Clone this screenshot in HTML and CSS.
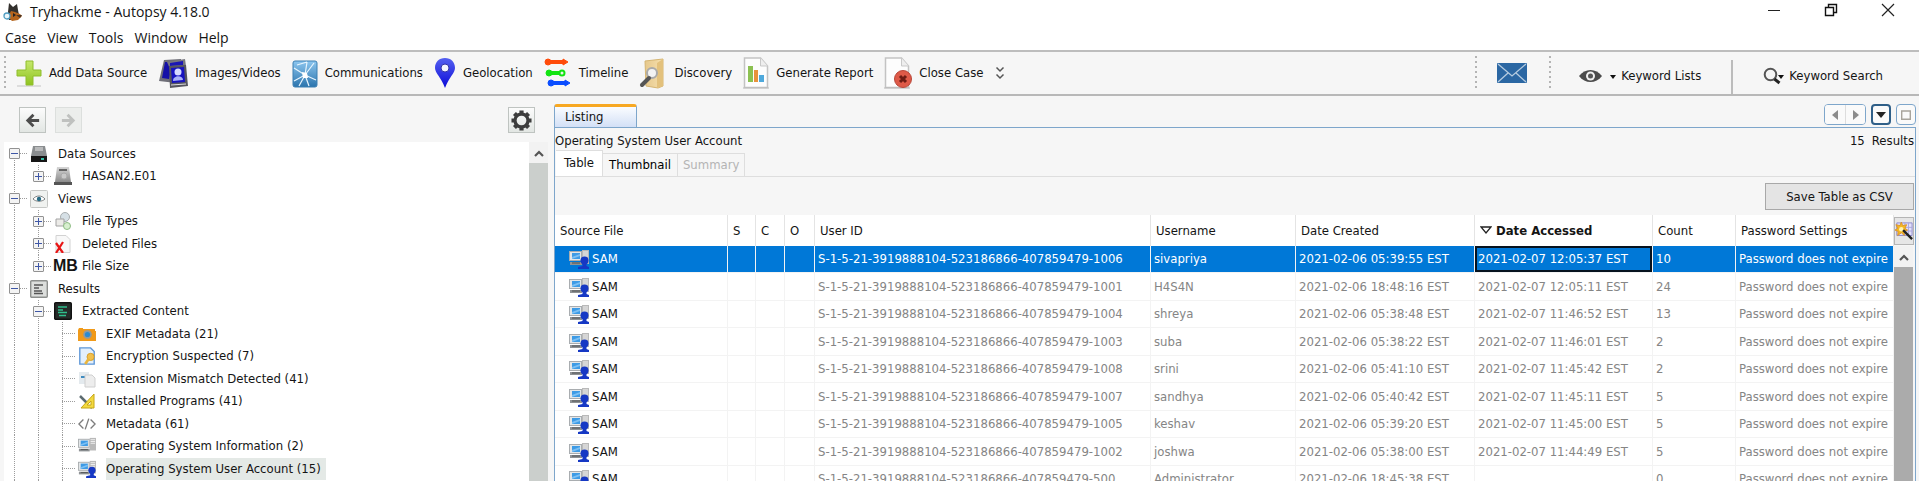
FILE: index.html
```html
<!DOCTYPE html>
<html lang="en">
<head>
<meta charset="utf-8">
<title>Tryhackme - Autopsy 4.18.0</title>
<link rel="stylesheet" href="styles.css">
</head>
<body>
<svg class="defs" aria-hidden="true">
  <defs>
    <linearGradient id="gGreen" x1="0" y1="0" x2="0" y2="1"><stop offset="0" stop-color="#c5e86c"/><stop offset="1" stop-color="#8fc31f"/></linearGradient>
    <linearGradient id="gSky" x1="0" y1="0" x2="0" y2="1"><stop offset="0" stop-color="#8cc6ef"/><stop offset="1" stop-color="#2b74ad"/></linearGradient>
    <linearGradient id="gBlue" x1="0" y1="0" x2="0" y2="1"><stop offset="0" stop-color="#5560f0"/><stop offset="1" stop-color="#0b0bd8"/></linearGradient>
    <linearGradient id="gFolder" x1="0" y1="0" x2="1" y2="0"><stop offset="0" stop-color="#e6c88c"/><stop offset="1" stop-color="#f6e0ae"/></linearGradient>
    <linearGradient id="gDrive" x1="0" y1="0" x2="0" y2="1"><stop offset="0" stop-color="#d6d6d6"/><stop offset="1" stop-color="#8c8c8c"/></linearGradient>
    <symbol id="pc" viewBox="0 0 20 20">
      <path d="M13 1h7v14h-7z" fill="#b9b9b9"/><path d="M14 3h5M14 5h5M14 7h5" stroke="#f2f2f2"/>
      <path d="M0 2h13v10H0z" fill="#a9adb0"/><path d="M1 3h11v8H1z" fill="#e3e6e8"/>
      <path d="M3 4h8v6H3z" fill="#3d9be6"/><path d="M3 8l8-3v2l-8 3z" fill="#7dc0f3"/>
      <path d="M1 13h12v3H1z" fill="#8f9295"/><path d="M3 14h8" stroke="#4e5254"/>
    </symbol>
    <symbol id="pcuser" viewBox="0 0 20 20">
      <use href="#pc" width="20" height="20"/>
      <circle cx="15.500" cy="11.500" r="4" fill="#1638c4"/><path d="M13.500 14h4v3l2.500 1v2H9v-2l4.500-1z" fill="#1638c4"/>
    </symbol>
    <symbol id="page" viewBox="0 0 26 32">
      <path d="M1.500 1h16l7 8v21.500h-23z" fill="#fdfdfd" stroke="#c3c3c3" stroke-width="1.500"/><path d="M17.500 1v8h7" fill="#eee" stroke="#c9c9c9"/><path d="M0 31h26" stroke="#bbb"/>
    </symbol>
  </defs>
</svg>

<header class="titlebar">
  <svg class="app-icon" viewBox="0 0 20 18"><path d="M6 0l4 4 4-3 1 6 1 5-3 5H6l-1-8z" fill="#33302d"/><path d="M8 8l4 1 5 2 2 2-4 4-6 1-4-4z" fill="#b5651d"/><path d="M10 10l3 2-3 2z" fill="#222"/><path d="M13 12l6 0-2 3z" fill="#4b3626"/><circle cx="4" cy="13" r="3" fill="#eaf6fb" stroke="#4f9cc0" stroke-width="1.300"/></svg>
  <h1 class="title">Tryhackme - Autopsy 4.18.0</h1>
  <div class="window-controls">
    <button aria-label="Minimize"><svg viewBox="0 0 14 14"><path d="M1 7.500h12" stroke="#222"/></svg></button>
    <button aria-label="Restore"><svg viewBox="0 0 14 14"><path d="M1.500 4.500h8v8h-8zM4.500 4V1.500h8v8H10" fill="none" stroke="#111" stroke-width="1.400"/></svg></button>
    <button aria-label="Close"><svg viewBox="0 0 14 14"><path d="M1 1l12 12M13 1L1 13" stroke="#222" stroke-width="1.200"/></svg></button>
  </div>
</header>

<nav class="menubar">
  <button>Case</button><button>View</button><button>Tools</button><button>Window</button><button>Help</button>
</nav>

<div class="toolbar">
  <span class="grip"></span>
  <div class="tools">
    <button class="tool add"><svg viewBox="0 0 26 32"><path d="M1 29h24" stroke="#ddd" stroke-width="2"/><path d="M10 4h7v9h8v6h-8v9h-7v-9H1v-6h9z" fill="url(#gGreen)" stroke="#8fbd2c"/></svg>Add Data Source</button>
    <button class="tool images"><svg viewBox="0 0 30 32"><path d="M6 3l17-1v6L18 26 1 24z" fill="#6f6f78"/><path d="M7 5l8 0-4 17-7-1z" fill="#1410a8"/><path d="M9 5l18-3 1 7-16 3z" fill="#77777f"/><path d="M12 6l13-2v4l-13 1z" fill="#1b16b4"/><path d="M11 9l17-1 2 21-18 2z" fill="#55555e"/><path d="M13 11l13-1 1 15-13 1z" fill="#1713c0"/><circle cx="20" cy="15" r="3.500" fill="#d5d9ff"/><path d="M15 24c0-6 10-6 10-1z" fill="#aab1f8"/><path d="M13 28l15-1" stroke="#ddd"/></svg>Images/Videos</button>
    <button class="tool comms"><svg viewBox="0 0 26 32"><rect x="1" y="4" width="24" height="26" rx="2" fill="url(#gSky)" stroke="#3d80b3"/><g stroke="#e8f5fd" stroke-width="1.200" fill="none"><path d="M2 11l11 7L22 6M13 18l-6 11M13 18l11 5M13 18l4 11M2 24l11-6M13 18l2-13M15 5l-10 3"/></g><path d="M10 15l5 1 1 5-5 0z" fill="#fff"/></svg>Communications</button>
    <button class="tool geo"><svg viewBox="0 0 22 32"><path d="M11 1c-6 0-10 4-10 10 0 5 6 9 10 20 4-11 10-15 10-20 0-6-4-10-10-10z" fill="url(#gBlue)"/><circle cx="11" cy="11" r="4" fill="#f4f4ff" stroke="#3032a8"/></svg>Geolocation</button>
    <button class="tool time"><svg viewBox="0 0 28 32"><g fill="#ff4b0a" stroke="#ff4b0a"><circle cx="4" cy="5" r="3"/><path d="M4 5h16" stroke-width="4"/><path d="M19 2l5 3-5 3z"/></g><g fill="#12e412" stroke="#12e412"><circle cx="5" cy="16" r="3"/><path d="M5 16h13" stroke-width="4"/><circle cx="18" cy="16" r="2.500" fill="#eee" stroke-width="2"/></g><g fill="#0a4dff" stroke="#0a4dff"><circle cx="7" cy="26" r="3"/><path d="M7 26h15" stroke-width="4"/><path d="M21 23l5 3-5 3z"/></g></svg>Timeline</button>
    <button class="tool disc"><svg viewBox="0 0 28 32"><path d="M6 4l18-2v27l-5 2L7 29z" fill="url(#gFolder)" stroke="#d5b572"/><path d="M18 6l6-4v27l-6 2z" fill="#e3c17c"/><circle cx="13" cy="16" r="5" fill="#f3f3f3" stroke="#aaa" stroke-width="2"/><path d="M10 21l-7 7" stroke="#555" stroke-width="4" stroke-linecap="round"/></svg>Discovery</button>
    <button class="tool report"><svg viewBox="0 0 26 32"><use href="#page" width="26" height="32"/><path d="M5 9h5v16H5z" fill="#8cc152"/><path d="M11 13h4v12h-4z" fill="#e8923c"/><path d="M16 18h5v7h-5z" fill="#4fa9dc"/></svg>Generate Report</button>
    <button class="tool closecase"><svg viewBox="0 0 28 32"><use href="#page" width="26" height="32"/><circle cx="19" cy="22" r="8.500" fill="#de5a48" stroke="#b8473a"/><path d="M16 19l6 6M22 19l-6 6" stroke="#6d1c14" stroke-width="3"/></svg>Close Case</button>
    <button class="more" aria-label="More"><svg viewBox="0 0 10 14"><path d="M1.500 1.500L5 5l3.500-3.500M1.500 8.500L5 12l3.500-3.500" fill="none" stroke="#555" stroke-width="1.500"/></svg></button>
  </div>
  <span class="grip"></span>
  <button class="mail" aria-label="Messages"><svg viewBox="0 0 30 20"><rect width="30" height="20" rx="1" fill="#2b67a3"/><path d="M1 1l14 12L29 1M1 19l10-9M29 19l-10-9" fill="none" stroke="#b5cbe0" stroke-width="1.300"/></svg></button>
  <span class="grip"></span>
  <button class="kw lists"><svg viewBox="0 0 38 14"><path d="M0 7c6-8 17-8 23 0-6 8-17 8-23 0z" fill="#4b4b4b"/><circle cx="11.500" cy="7" r="4.500" fill="#f0f0f0"/><circle cx="11.500" cy="7" r="2.500" fill="#555"/><path d="M31 6h6l-3 4z" fill="#111"/></svg>Keyword Lists</button>
  <span class="sep"></span>
  <button class="kw search"><svg viewBox="0 0 22 18"><circle cx="7.500" cy="7.500" r="5.800" fill="#f5f5f5" stroke="#555" stroke-width="2"/><path d="M11.500 12l5 4" stroke="#222" stroke-width="3"/><path d="M15 8h6l-3 4z" fill="#111"/></svg>Keyword Search</button>
</div>

<main class="workspace">
  <section class="explorer" aria-label="Explorer">
    <div class="nav">
      <button aria-label="Back"><svg viewBox="0 0 18 18"><path d="M16 9H4M10 3L4 9l6 6" fill="none" stroke="#4c4c4c" stroke-width="3"/></svg></button>
      <button aria-label="Forward" disabled><svg viewBox="0 0 18 18"><path d="M2 9h12M8 3l6 6-6 6" fill="none" stroke="#bfc1bf" stroke-width="3"/></svg></button>
      <button class="gear" aria-label="Options"><svg viewBox="0 0 22 22"><circle cx="11" cy="11" r="6.800" fill="none" stroke="#3d3d3d" stroke-width="3.400"/><g stroke="#3d3d3d" stroke-width="4.400"><path d="M11 .5v4M11 17.500v4M.5 11h4M17.500 11h4M3.600 3.600l2.800 2.800M15.600 15.600l2.800 2.800M18.400 3.600l-2.800 2.800M6.400 15.600l-2.800 2.800"/></g></svg></button>
    </div>
    <div class="tree-area">
      <ul class="tree">
        <li><span class="slot first"><button class="box" aria-label="Collapse"></button></span><svg viewBox="0 0 18 18"><path d="M3 1h12l2 10H1z" fill="#8a8d8f"/><path d="M5 3h8M5 5h8" stroke="#e6e6e6"/><path d="M1 11h16v6H1z" fill="#161616"/><path d="M11 13h3v2h-3z" fill="#37c0a8"/></svg>Data Sources</li>
        <li><span class="slot pass"></span><span class="slot last"><button class="box plus" aria-label="Expand"></button></span><svg viewBox="0 0 18 18"><path d="M3 0h12l2 15H1z" fill="url(#gDrive)"/><path d="M5 3h8" stroke="#444" stroke-width="1.500"/><circle cx="10" cy="9" r="3" fill="#c9c9c9" stroke="#aaa"/><path d="M0 15h18v3H0z" fill="#555"/></svg>HASAN2.E01</li>
        <li><span class="slot tee"><button class="box" aria-label="Collapse"></button></span><svg viewBox="0 0 18 18"><rect x=".5" y=".5" width="17" height="17" rx="1" fill="#f0f2f0" stroke="#c6c8c6"/><path d="M3 9c3-4 9-4 12 0-3 3-9 3-12 0z" fill="#fff" stroke="#7d8182"/><circle cx="9" cy="9" r="2.200" fill="#286c85"/></svg>Views</li>
        <li><span class="slot pass"></span><span class="slot tee"><button class="box plus" aria-label="Expand"></button></span><svg viewBox="0 0 18 18"><circle cx="11" cy="5" r="4.500" fill="#d6e0e6" stroke="#a9aeb0"/><path d="M2 7h8v7H2z" fill="#ecebe8" stroke="#a2a2a2"/><circle cx="13" cy="14" r="3.500" fill="#d8efcf" stroke="#8ebc84"/></svg>File Types</li>
        <li><span class="slot pass"></span><span class="slot tee"><button class="box plus" aria-label="Expand"></button></span><svg viewBox="0 0 18 18"><path d="M2 .5h10l4 4v13H2z" fill="#f8f8f8" stroke="#d2d2d2"/><path d="M2 8l7 10M9 7L2 18" stroke="#e81515" stroke-width="2.200"/></svg>Deleted Files</li>
        <li><span class="slot pass"></span><span class="slot last"><button class="box plus" aria-label="Expand"></button></span><b class="mb">MB</b>File Size</li>
        <li><span class="slot tee"><button class="box" aria-label="Collapse"></button></span><svg viewBox="0 0 18 18"><rect x=".7" y=".7" width="16.600" height="16.600" rx="1" fill="#dcdedc" stroke="#8d8f8d" stroke-width="1.400"/><path d="M4 5h9M4 8h5M4 11h8M4 13.500h9" stroke="#555" stroke-width="1.500"/></svg>Results</li>
        <li><span class="slot pass"></span><span class="slot tee"><button class="box" aria-label="Collapse"></button></span><svg viewBox="0 0 18 18"><rect x=".7" y=".7" width="16.600" height="16.600" rx="1" fill="#262b29" stroke="#111" stroke-width="1.400"/><path d="M4 5h9M4 8h5M4 10.500h9M5 13.500h7" stroke="#2fbf8c" stroke-width="1.500"/></svg>Extracted Content</li>
        <li><span class="slot pass"></span><span class="slot pass"></span><span class="slot tee"></span><svg viewBox="0 0 18 18"><path d="M0 5l1-2h4v1h12v2h1v10H0z" fill="#f09a1a"/><circle cx="9.500" cy="9.500" r="4.300" fill="#8f9aa0"/><circle cx="9.500" cy="9.500" r="2.600" fill="#2b8bd0"/></svg>EXIF Metadata (21)</li>
        <li><span class="slot pass"></span><span class="slot pass"></span><span class="slot tee"></span><svg viewBox="0 0 18 20"><path d="M1 1h12l4 4v14H1z" fill="#e3effb" stroke="#5c96d8" stroke-width="1.500"/><circle cx="13" cy="11" r="4" fill="#f2c04c" stroke="#d29a26"/><path d="M11 13l-4 6" stroke="#eab53c" stroke-width="3"/></svg>Encryption Suspected (7)</li>
        <li><span class="slot pass"></span><span class="slot pass"></span><span class="slot tee"></span><svg viewBox="0 0 18 18"><path d="M1 2h10v12H1z" fill="#e4eaee"/><path d="M3 7h6" stroke="#3e8bc0" stroke-width="2"/><path d="M7 5h7l3 3v9H7z" fill="#ededed" stroke="#cfcfcf"/></svg>Extension Mismatch Detected (41)</li>
        <li><span class="slot pass"></span><span class="slot pass"></span><span class="slot tee"></span><svg viewBox="0 0 18 18"><path d="M2 4l12 12" stroke="#5c6b70" stroke-width="2.500"/><path d="M16 2v14H3z" fill="#f3d940" stroke="#c6a617"/><path d="M13 9v4H9z" fill="#fff" stroke="#c6a617"/></svg>Installed Programs (41)</li>
        <li><span class="slot pass"></span><span class="slot pass"></span><span class="slot tee"></span><svg viewBox="0 0 20 18"><path d="M6 4L1 9l5 5M14 4l5 5-5 5M12 3L8 15" fill="none" stroke="#7d7d7d" stroke-width="1.500"/></svg>Metadata (61)</li>
        <li><span class="slot pass"></span><span class="slot pass"></span><span class="slot tee"></span><svg viewBox="0 0 20 20"><use href="#pc" width="20" height="20"/></svg>Operating System Information (2)</li>
        <li><span class="slot pass"></span><span class="slot pass"></span><span class="slot tee"></span><svg viewBox="0 0 20 20"><use href="#pcuser" width="20" height="20"/></svg><span class="selected">Operating System User Account (15)</span></li>
        <li><span class="slot pass"></span><span class="slot pass"></span><span class="slot tee"></span></li>
      </ul>
      <div class="scroll"><button aria-label="Scroll up"><svg viewBox="0 0 10 8"><path d="M1 7l4-4 4 4" fill="none" stroke="#555" stroke-width="2.200"/></svg></button><span class="thumb"></span></div>
    </div>
  </section>

  <section class="listing" aria-label="Listing">
    <div class="tabstrip">
      <button class="tab">Listing</button>
      <div class="tabtools">
        <span class="pair"><button aria-label="Previous tab"><svg viewBox="0 0 6 10"><path d="M6 0v10L0 5z" fill="#8c8c8c"/></svg></button><button aria-label="Next tab"><svg viewBox="0 0 6 10"><path d="M0 0v10l6-5z" fill="#8c8c8c"/></svg></button></span>
        <button class="single dark" aria-label="Tab list"><svg viewBox="0 0 10 6"><path d="M0 0h10L5 6z" fill="#222"/></svg></button>
        <button class="single" aria-label="Maximize"><svg viewBox="0 0 10 10"><path d="M.7 1h8.600v8.300H.7z" fill="none" stroke="#a8a49c" stroke-width="1.400"/></svg></button>
      </div>
    </div>
    <div class="panel">
      <div class="caption"><span>Operating System User Account</span><span class="results"><span>15</span><span>Results</span></span></div>
      <div class="subtabs"><button class="on">Table</button><button class="thumbs">Thumbnail</button><button disabled>Summary</button></div>
      <div class="actions"><button>Save Table as CSV</button></div>
      <div class="grid-area">
        <div class="grid">
          <table>
            <colgroup><col class="c-src"><col class="c-s"><col class="c-c"><col class="c-o"><col class="c-id"><col class="c-user"><col class="c-date"><col class="c-acc"><col class="c-count"><col></colgroup>
            <thead><tr><th>Source File</th><th>S</th><th>C</th><th>O</th><th>User ID</th><th>Username</th><th>Date Created</th><th class="sorted"><svg viewBox="0 0 12 8"><path d="M1 1h10L6 7z" fill="none" stroke="#222" stroke-width="1.300"/></svg>Date Accessed</th><th>Count</th><th>Password Settings</th></tr></thead>
            <tbody>
              <tr class="active"><td><svg><use href="#pcuser"/></svg>SAM</td><td></td><td></td><td></td><td>S-1-5-21-3919888104-523186866-407859479-1006</td><td>sivapriya</td><td>2021-02-06 05:39:55 EST</td><td class="focus">2021-02-07 12:05:37 EST</td><td>10</td><td>Password does not expire</td></tr>
              <tr><td><svg><use href="#pcuser"/></svg>SAM</td><td></td><td></td><td></td><td>S-1-5-21-3919888104-523186866-407859479-1001</td><td>H4S4N</td><td>2021-02-06 18:48:16 EST</td><td>2021-02-07 12:05:11 EST</td><td>24</td><td>Password does not expire</td></tr>
              <tr><td><svg><use href="#pcuser"/></svg>SAM</td><td></td><td></td><td></td><td>S-1-5-21-3919888104-523186866-407859479-1004</td><td>shreya</td><td>2021-02-06 05:38:48 EST</td><td>2021-02-07 11:46:52 EST</td><td>13</td><td>Password does not expire</td></tr>
              <tr><td><svg><use href="#pcuser"/></svg>SAM</td><td></td><td></td><td></td><td>S-1-5-21-3919888104-523186866-407859479-1003</td><td>suba</td><td>2021-02-06 05:38:22 EST</td><td>2021-02-07 11:46:01 EST</td><td>2</td><td>Password does not expire</td></tr>
              <tr><td><svg><use href="#pcuser"/></svg>SAM</td><td></td><td></td><td></td><td>S-1-5-21-3919888104-523186866-407859479-1008</td><td>srini</td><td>2021-02-06 05:41:10 EST</td><td>2021-02-07 11:45:42 EST</td><td>2</td><td>Password does not expire</td></tr>
              <tr><td><svg><use href="#pcuser"/></svg>SAM</td><td></td><td></td><td></td><td>S-1-5-21-3919888104-523186866-407859479-1007</td><td>sandhya</td><td>2021-02-06 05:40:42 EST</td><td>2021-02-07 11:45:11 EST</td><td>5</td><td>Password does not expire</td></tr>
              <tr><td><svg><use href="#pcuser"/></svg>SAM</td><td></td><td></td><td></td><td>S-1-5-21-3919888104-523186866-407859479-1005</td><td>keshav</td><td>2021-02-06 05:39:20 EST</td><td>2021-02-07 11:45:00 EST</td><td>5</td><td>Password does not expire</td></tr>
              <tr><td><svg><use href="#pcuser"/></svg>SAM</td><td></td><td></td><td></td><td>S-1-5-21-3919888104-523186866-407859479-1002</td><td>joshwa</td><td>2021-02-06 05:38:00 EST</td><td>2021-02-07 11:44:49 EST</td><td>5</td><td>Password does not expire</td></tr>
              <tr><td><svg><use href="#pcuser"/></svg>SAM</td><td></td><td></td><td></td><td>S-1-5-21-3919888104-523186866-407859479-500</td><td>Administrator</td><td>2021-02-06 18:45:38 EST</td><td></td><td>0</td><td>Password does not expire</td></tr>
            </tbody>
          </table>
        </div>
        <div class="side">
          <button class="config" aria-label="Choose columns"><svg viewBox="0 0 20 20"><path d="M2 1h17v14H2z" fill="#e2e0fa" stroke="#8a85c8"/><path d="M11 1v14M15 1v14M6 6h13M6 10h13" stroke="#a9a5dc"/><path d="M7 0l1.500 4L13 3l-2 4 3 2-4 1.500.5 4.500L7 12l-4 3 .5-4.500L0 9l3-2-2-4 4.500 1z" fill="#f5b820" stroke="#d9922a"/><circle cx="7" cy="8" r="2.500" fill="#fff3b0"/><path d="M9 9l10 10" stroke="#222" stroke-width="2.600"/></svg></button>
          <div class="scroll dark"><button aria-label="Scroll up"><svg viewBox="0 0 10 8"><path d="M1 7l4-4 4 4" fill="none" stroke="#555" stroke-width="2.200"/></svg></button><span class="thumb"></span></div>
        </div>
      </div>
    </div>
  </section>
</main>
</body>
</html>
```
FILE: styles.css
```css
* { box-sizing: border-box; }

body {
  margin: 0;
  height: 100vh;
  display: flex;
  flex-direction: column;
  overflow: hidden;
  background: #f6f6f6;
  color: #141414;
  font: 13px/18px "DejaVu Sans Condensed", "Noto Sans", sans-serif;
}

button {
  margin: 0;
  padding: 0;
  border: 0;
  background: none;
  color: inherit;
  font: inherit;
  white-space: nowrap;
}

svg { display: block; flex: none; }
.defs { position: absolute; width: 0; height: 0; }

/* Title and menu */
.titlebar {
  display: flex;
  align-items: center;
  height: 24px;
  padding: 0 24px 0 3px;
  background: #fff;
}
.app-icon { width: 20px; height: 18px; margin-right: 7px; }
.title { margin: 0; font: 14px/20px "Open Sans", "Noto Sans", sans-serif; }
.window-controls { display: flex; gap: 43px; margin-left: auto; padding-bottom: 4px; }
.window-controls svg { width: 14px; height: 14px; }
.menubar {
  display: flex;
  gap: 11px;
  height: 28px;
  padding: 1px 5px 0;
  background: #fff;
  border-bottom: 2px solid #bdbdbd;
  font: 14px/25px "Open Sans", "Noto Sans", sans-serif;
}

/* Toolbar */
.toolbar {
  display: flex;
  align-items: center;
  height: 44px;
  border-bottom: 2px solid #b8b8b8;
  flex: none;
}
.grip {
  flex: none;
  width: 2px;
  height: 34px;
  margin-left: 4px;
  background: repeating-linear-gradient(#b4b4b4 0 2px, transparent 2px 5px);
}
.tools { display: flex; align-items: center; flex: 1; padding-left: 10px; }
.tool { display: flex; align-items: center; gap: 7px; margin-right: 11px; }
.tool svg { height: 32px; width: 26px; }
.tool.images svg { width: 30px; }
.tool.geo svg { width: 22px; }
.tool.time svg, .tool.disc svg, .tool.closecase svg { width: 28px; }
.more svg { width: 10px; height: 14px; }
.mail { margin: 0 18px 0 20px; }
.mail svg { width: 30px; height: 20px; }
.kw { display: flex; align-items: center; gap: 4px; padding-top: 6px; }
.kw.lists { margin: 0 30px 0 28px; }
.kw.lists svg { width: 38px; height: 14px; }
.kw.search { margin: 0 36px 0 30px; }
.kw.search svg { width: 22px; height: 18px; }
.sep { width: 2px; align-self: flex-end; height: 34px; background: #bcbcbc; }

/* Two panes */
.workspace { display: flex; flex: 1; min-height: 0; }

.explorer { display: flex; flex-direction: column; flex: none; width: 548px; padding-left: 4px; }
.nav { display: flex; align-items: flex-start; gap: 9px; height: 46px; padding: 11px 13px 0 15px; flex: none; }
.nav button {
  display: grid;
  place-items: center;
  width: 27px;
  height: 26px;
  border: 1px solid #bfc4c1;
  background: linear-gradient(#fcfcfc, #e2e6e3);
}
.nav button:disabled { border-color: #dcdfdd; background: #eceeec; }
.nav svg { width: 17px; height: 17px; }
.nav .gear { margin-left: auto; }
.nav .gear svg { width: 21px; height: 21px; }

.tree-area { display: flex; flex: 1; min-height: 0; background: #fff; }
.tree { flex: 1; margin: 0; padding: 0; list-style: none; overflow: hidden; }
.tree li { display: flex; align-items: center; height: 22px; white-space: nowrap; }
.tree li:nth-child(odd) { height: 23px; }
.tree li > svg { width: 18px; height: 18px; margin: 0 10px 0 2px; }
.mb { width: 30px; padding-left: 1px; flex: none; font: bold 16px/20px "Liberation Sans", sans-serif; }
.selected { background: #e4e9e6; padding-right: 5px; line-height: 22px; }

.slot {
  --v: repeating-linear-gradient(#9c9c9c 0 1px, transparent 1px 2px);
  --h: repeating-linear-gradient(90deg, #9c9c9c 0 1px, transparent 1px 2px);
  flex: none;
  display: flex;
  align-items: center;
  width: 24px;
  height: 100%;
  padding-left: 5px;
  background-repeat: no-repeat;
}
.pass { background-image: var(--v); background-position: 10px 0; background-size: 1px 100%; }
.tee, .last, .first { background-image: var(--v), var(--h); }
.tee { background-position: 10px 0, 10px 50%; background-size: 1px 100%, 14px 1px; }
.last { background-position: 10px 0, 10px 50%; background-size: 1px 50%, 14px 1px; }
.first { background-position: 10px 100%, 10px 50%; background-size: 1px 50%, 14px 1px; }
.box {
  width: 11px;
  height: 11px;
  border: 1px solid #929292;
  border-radius: 1px;
  background: linear-gradient(#3f57a6, #3f57a6) 50% 50% / 7px 1px no-repeat #f4f4f4;
}
.box.plus {
  background:
    linear-gradient(#3f57a6, #3f57a6) 50% 50% / 7px 1px no-repeat,
    linear-gradient(#3f57a6, #3f57a6) 50% 50% / 1px 7px no-repeat #f4f4f4;
}

.scroll { display: flex; flex-direction: column; flex: none; width: 19px; background: #f2f2f2; }
.scroll button { display: grid; place-items: center; height: 21px; flex: none; }
.scroll svg { width: 10px; height: 8px; }
.thumb { flex: 1; background: #cbcfcc; }
.scroll.dark { flex: 1; }
.scroll.dark .thumb { background: #ababab; }

.listing { display: flex; flex-direction: column; flex: 1; min-width: 0; padding: 8px 3px 0 6px; }
.tabstrip { display: flex; justify-content: space-between; height: 23px; flex: none; }
.tab {
  width: 83px;
  padding-left: 10px;
  text-align: left;
  border: solid #7ea6cb;
  border-width: 3px 1px 0;
  border-top-color: #f7a823;
  border-radius: 3px 3px 0 0;
  background: linear-gradient(#fafcff, #d3e0f6);
}
.tabtools { display: flex; gap: 5px; height: 21px; }
.tabtools button { display: grid; place-items: center; width: 20px; background: #fafafa; }
.pair { display: flex; border: 1px solid #7ea6cb; border-radius: 4px; overflow: hidden; }
.pair button + button { border-left: 1px solid #ddd; }
.pair svg { width: 6px; height: 10px; }
.single { border: 1px solid #7ea6cb; border-radius: 4px; }
.single.dark { border: 2px solid #2f5f88; }
.single svg { width: 10px; }

.panel {
  display: flex;
  flex-direction: column;
  flex: 1;
  min-height: 0;
  border: solid #7ea6cb;
  border-width: 1px 1px 0 1px;
}
.caption { display: flex; justify-content: space-between; height: 23px; padding: 4px 1px 0 0; flex: none; }
.results { display: flex; gap: 7px; }
.subtabs { display: flex; align-items: flex-end; height: 26px; flex: none; border-bottom: 1px solid #dedede; padding-left: 1px; }
.subtabs button { height: 23px; padding: 0 5px; border: 1px solid #dedede; border-left-width: 0; border-bottom: 0; }
.subtabs .on { height: 26px; padding: 0 8px 2px; background: #fff; }
.subtabs .thumbs { padding: 0 6px; color: #000; }
.subtabs button:disabled { color: #b4b4b4; }
.actions { display: flex; justify-content: flex-end; height: 38px; padding: 6px 1px 0; flex: none; }
.actions button { width: 149px; height: 27px; border: 1px solid #a8a8a8; background: #e4e4e4; }

.grid-area { display: flex; flex: 1; min-height: 0; }
.grid { flex: 1; min-width: 0; overflow: hidden; background: #fff; }
table { width: 100%; table-layout: fixed; border-collapse: separate; border-spacing: 0; }
.c-src { width: 173px; }
.c-s { width: 28px; }
.c-c { width: 29px; }
.c-o { width: 30px; }
.c-id { width: 336px; }
.c-user { width: 145px; }
.c-date { width: 179px; }
.c-acc { width: 178px; }
.c-count { width: 83px; }
th {
  height: 31px;
  padding: 1px 0 0 5px;
  text-align: left;
  font-weight: normal;
  white-space: nowrap;
  border-right: 1px solid #e4e4e4;
}
th.sorted { font-weight: bold; }
th svg { display: inline-block; width: 12px; height: 8px; margin-right: 4px; vertical-align: 1px; }
td {
  height: 28px;
  padding: 0 0 0 3px;
  color: #858585;
  white-space: nowrap;
  overflow: hidden;
  border: solid #f3f3f3;
  border-width: 0 1px 1px 0;
}
tr:nth-child(odd) td { height: 27px; }
td:first-child { color: #141414; padding-left: 14px; }
td svg { display: inline-block; width: 20px; height: 20px; margin-right: 3px; vertical-align: middle; }
tr.active td { background: #0078d7; background-clip: padding-box; color: #fff; }
tr.active td.focus { box-shadow: inset 0 0 0 2px #06131f; }
.side { display: flex; flex-direction: column; flex: none; width: 20px; margin-right: 1px; }
.config { height: 28px; margin: 2px 0 1px; border: 1px solid #b5b5b5; background: #e6e6e6; }
.config svg { width: 18px; height: 20px; }
```
